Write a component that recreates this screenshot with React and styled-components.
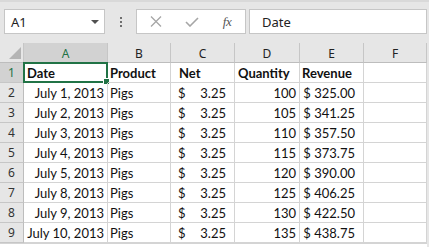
import styled, { createGlobalStyle } from "styled-components";

const GlobalStyle = createGlobalStyle`
  html, body {
    margin: 0;
    padding: 0;
    overflow: hidden;
    background: #ffffff;
  }
`;

const GREEN = "#217346";

const Window = styled.div`
  width: 429px;
  height: 247px;
  background: #e6e6e6;
  display: flex;
  flex-direction: column;
  overflow: hidden;
`;

const Toolbar = styled.div`
  height: 43px;
  box-sizing: border-box;
  border-top: 2px solid #d9d9d9;
  padding: 7px 2px 0 4px;
  display: flex;
  align-items: flex-start;
`;

const NameBox = styled.div`
  width: 101px;
  height: 25px;
  box-sizing: border-box;
  background: #fff;
  border: 1px solid #c6c6c6;
  display: flex;
  align-items: center;
  justify-content: space-between;
  padding: 0 5px 0 6px;
  font-family: "Noto Sans", sans-serif;
  font-size: 13px;
  color: #222;
`;

const Caret = styled.span`
  width: 0;
  height: 0;
  border-left: 4px solid transparent;
  border-right: 4px solid transparent;
  border-top: 4px solid #505050;
`;

const DotsArea = styled.div`
  width: 31px;
  height: 25px;
  display: flex;
  flex-direction: column;
  align-items: center;
  justify-content: center;
  gap: 2px;
`;

const Dot = styled.span`
  width: 2px;
  height: 2px;
  background: #6e6e6e;
`;

const ButtonBox = styled.div`
  width: 110px;
  height: 25px;
  box-sizing: border-box;
  background: #fff;
  border: 1px solid #c6c6c6;
  display: flex;
  align-items: center;
`;

const IconButton = styled.div`
  width: ${(p) => p.$w}px;
  height: 100%;
  display: flex;
  align-items: center;
  justify-content: center;
`;

const Fx = styled.span`
  font-family: "Liberation Serif", serif;
  font-style: italic;
  font-size: 13px;
  color: #555;
  letter-spacing: -0.5px;
`;

const FormulaInput = styled.div`
  flex: 1;
  margin-left: 3px;
  height: 25px;
  box-sizing: border-box;
  background: #fff;
  border: 1px solid #c6c6c6;
  display: flex;
  align-items: center;
  padding-left: 12px;
  font-family: "Noto Sans", sans-serif;
  font-size: 13px;
  color: #222;
`;

const Sheet = styled.div`
  display: grid;
  grid-template-columns: 24px 84px 63px 64px 65px 64px 63px;
  grid-auto-rows: 20px;
  width: 427px;
  background: #fff;
`;

const Corner = styled.div`
  position: relative;
  background: #e6e6e6;
  border-right: 1px solid #c6c6c6;
  border-bottom: 1px solid #bdbdbd;
  box-sizing: border-box;
  &::after {
    content: "";
    position: absolute;
    right: 2px;
    bottom: 3px;
    width: 0;
    height: 0;
    border-left: 12px solid transparent;
    border-bottom: 12px solid #b4b4b4;
  }
`;

const ColHead = styled.div`
  box-sizing: border-box;
  background: ${(p) => (p.$active ? "#d2d2d2" : "#e6e6e6")};
  color: ${(p) => (p.$active ? GREEN : "#222")};
  border-right: 1px solid #c6c6c6;
  border-bottom: 1px solid ${(p) => (p.$active ? GREEN : "#bdbdbd")};
  display: flex;
  align-items: center;
  justify-content: center;
  font-family: "Noto Sans", sans-serif;
  font-size: 12px;
  padding-top: 1px;
`;

const RowHead = styled.div`
  box-sizing: border-box;
  background: ${(p) => (p.$active ? "#d2d2d2" : "#e6e6e6")};
  color: ${(p) => (p.$active ? GREEN : "#333")};
  border-right: 1px solid ${(p) => (p.$active ? GREEN : "#bdbdbd")};
  border-bottom: 1px solid #c6c6c6;
  display: flex;
  align-items: center;
  justify-content: center;
  font-family: "Noto Sans", sans-serif;
  font-size: 12px;
`;

const Cell = styled.div`
  position: relative;
  box-sizing: border-box;
  border-right: 1px solid #d4d4d4;
  border-bottom: 1px solid #d4d4d4;
  display: flex;
  align-items: center;
  justify-content: ${(p) => p.$justify || "flex-start"};
  padding: 1px ${(p) => p.$pr ?? 3}px 0 ${(p) => p.$pl ?? 3}px;
  font-family: Lato, "Noto Sans", sans-serif;
  font-size: 13px;
  font-weight: ${(p) => (p.$bold ? 700 : 400)};
  color: #111;
  white-space: nowrap;
  overflow: visible;
`;

const Selection = styled.div`
  position: absolute;
  left: -1px;
  top: -1px;
  right: -1px;
  bottom: -1px;
  border: 2px solid ${GREEN};
  pointer-events: none;
  &::after {
    content: "";
    position: absolute;
    right: -4px;
    bottom: -4px;
    width: 5px;
    height: 5px;
    background: ${GREEN};
    border: 1px solid #fff;
  }
`;

const Footer = styled.div`
  width: 427px;
  height: 4px;
  background: #fff;
  border-top: 1px solid #d4d4d4;
  box-sizing: border-box;
`;

const columns = ["A", "B", "C", "D", "E", "F"];

const data = [
  ["July 1, 2013", 100, "325.00"],
  ["July 2, 2013", 105, "341.25"],
  ["July 3, 2013", 110, "357.50"],
  ["July 4, 2013", 115, "373.75"],
  ["July 5, 2013", 120, "390.00"],
  ["July 8, 2013", 125, "406.25"],
  ["July 9, 2013", 130, "422.50"],
  ["July 10, 2013", 135, "438.75"],
];

const CloseIcon = () => (
  <svg width="12" height="11" viewBox="0 0 12 11">
    <path d="M1 0.5 L11 10.5 M11 0.5 L1 10.5" stroke="#a6a6a6" strokeWidth="1.3" fill="none" />
  </svg>
);

const CheckIcon = () => (
  <svg width="14" height="10" viewBox="0 0 14 10">
    <path d="M1 5 L5 9 L13 1" stroke="#a6a6a6" strokeWidth="1.6" fill="none" />
  </svg>
);

export default function App() {
  return (
    <>
      <GlobalStyle />
      <Window>
        <Toolbar>
          <NameBox>
            A1
            <Caret />
          </NameBox>
          <DotsArea>
            <Dot />
            <Dot />
            <Dot />
          </DotsArea>
          <ButtonBox>
            <IconButton $w={38}>
              <CloseIcon />
            </IconButton>
            <IconButton $w={34}>
              <CheckIcon />
            </IconButton>
            <IconButton $w={36}>
              <Fx>fx</Fx>
            </IconButton>
          </ButtonBox>
          <FormulaInput>Date</FormulaInput>
        </Toolbar>
        <Sheet>
          <Corner />
          {columns.map((c) => (
            <ColHead key={c} $active={c === "A"}>
              {c}
            </ColHead>
          ))}

          <RowHead $active>1</RowHead>
          <Cell $bold>
            Date
            <Selection />
          </Cell>
          <Cell $bold $pl={2}>Product</Cell>
          <Cell $bold $pl={8}>Net</Cell>
          <Cell $bold>Quantity</Cell>
          <Cell $bold $pl={2}>Revenue</Cell>
          <Cell />

          {data.map(([date, qty, rev], i) => (
            <Row key={date} n={i + 2} date={date} qty={qty} rev={rev} />
          ))}
        </Sheet>
        <Footer />
      </Window>
    </>
  );
}

function Row({ n, date, qty, rev }) {
  return (
    <>
      <RowHead>{n}</RowHead>
      <Cell $justify="flex-end">{date}</Cell>
      <Cell $pl={2}>Pigs</Cell>
      <Cell $justify="space-between" $pl={7} $pr={8}>
        <span>$</span>
        <span>3.25</span>
      </Cell>
      <Cell $justify="flex-end">{qty}</Cell>
      <Cell $justify="flex-end" $pr={8}>$ {rev}</Cell>
      <Cell />
    </>
  );
}
